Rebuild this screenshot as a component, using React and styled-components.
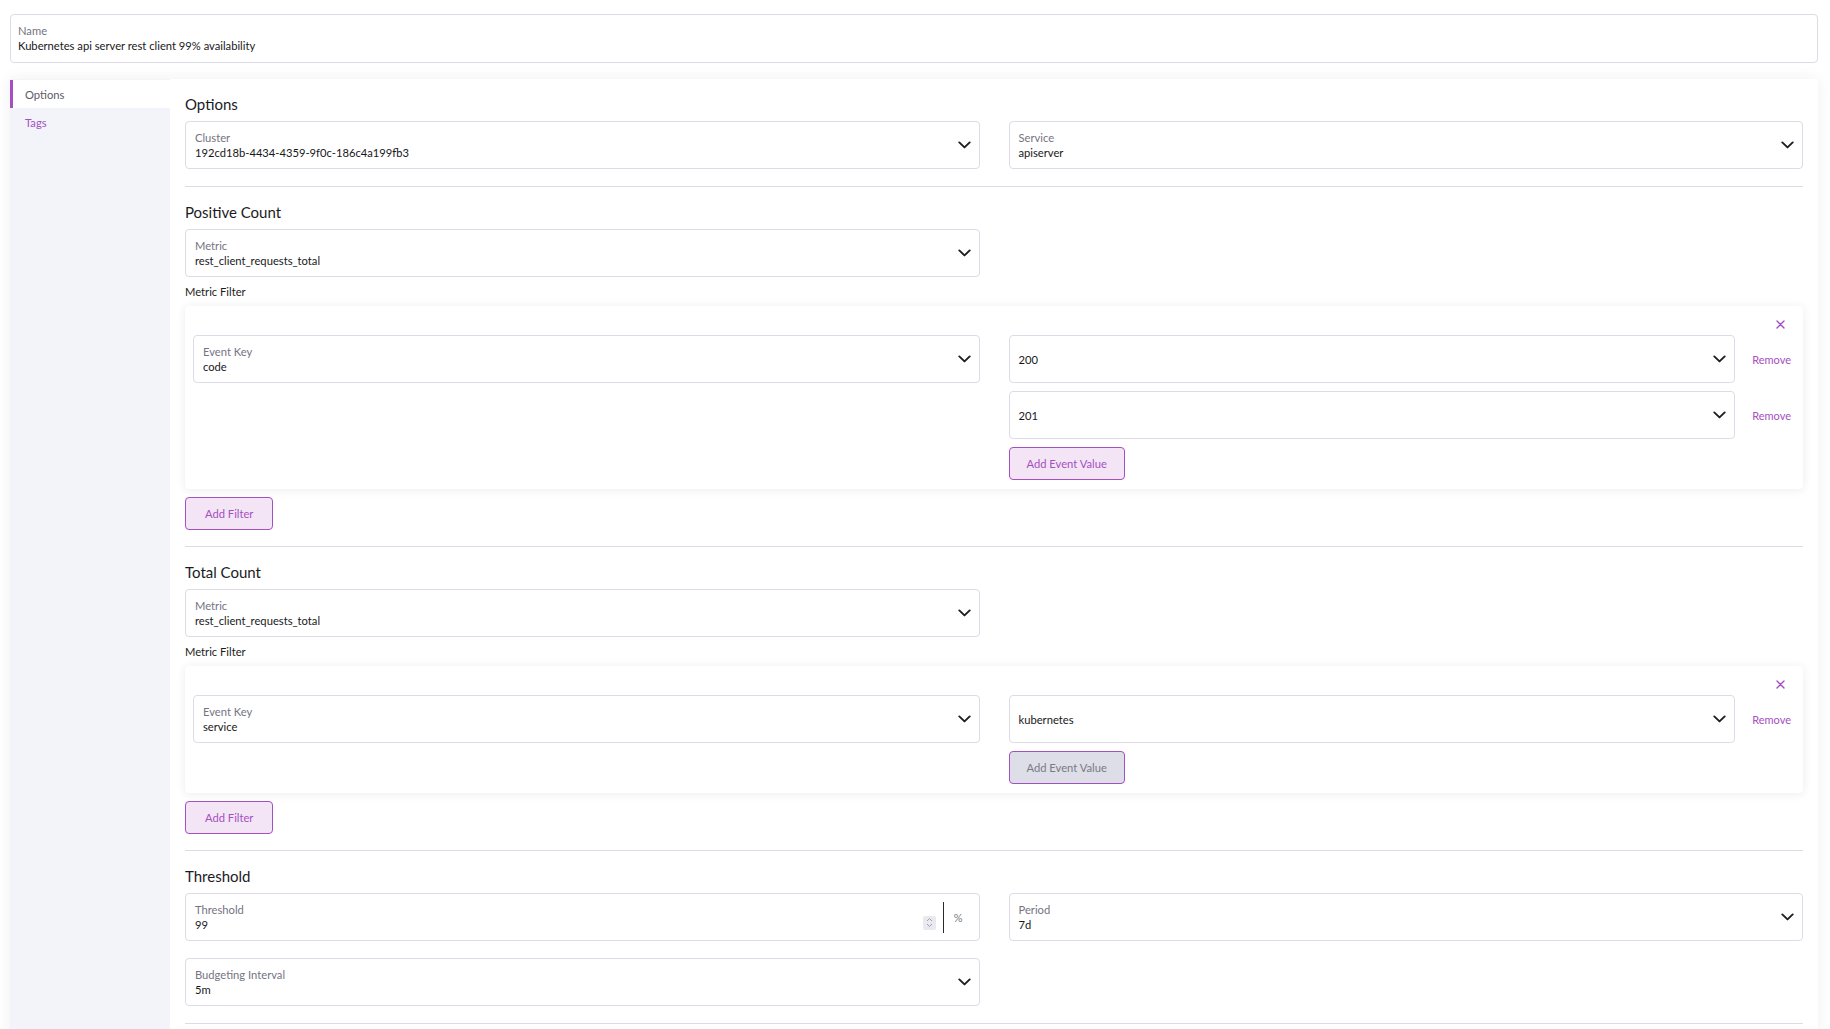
import React from 'react';
import styled, { createGlobalStyle, css } from 'styled-components';

const purple = '#a550c0';
const line = '#dddbe6';

const GlobalStyle = createGlobalStyle`
  html, body {
    margin: 0;
    padding: 0;
    background: #fff;
  }
  body {
    font-family: Lato, "Open Sans", sans-serif;
    color: #1c1c20;
  }
  * { box-sizing: border-box; }
  ::-webkit-scrollbar { width: 7px; }
  ::-webkit-scrollbar-track { background: #ededf2; }
  ::-webkit-scrollbar-thumb { background: #b4b4c0; border-radius: 4px; }
`;

const Chevron = () => (
  <svg width='13' height='8' viewBox='0 0 13 8' fill='none'>
    <path d='M1.3 1.4L6.5 6.4l5.2-5' stroke='#1d1d22' strokeWidth='1.9' strokeLinecap='round' strokeLinejoin='round' />
  </svg>
);

const Cross = () => (
  <svg width='9' height='9' viewBox='0 0 9 9' fill='none'>
    <path d='M1 1l7 7M8 1L1 8' stroke={purple} strokeWidth='1.4' strokeLinecap='round' />
  </svg>
);

const Select = ({ label, value }) => (
  <Field>
    <FieldText>
      {label && <FieldLabel>{label}</FieldLabel>}
      <FieldValue>{value}</FieldValue>
    </FieldText>
    <Chevron />
  </Field>
);

const ValueRow = ({ value }) => (
  <ValueLine>
    <Select value={value} />
    <RemoveLink>Remove</RemoveLink>
  </ValueLine>
);

const FilterBlock = ({ eventKey, values, disabled }) => (
  <>
    <SubLabel>Metric Filter</SubLabel>
    <FilterCard>
      <CloseRow>
        <Cross />
      </CloseRow>
      <Grid>
        <Select label='Event Key' value={eventKey} />
        <ValueColumn>
          {values.map((v) => (
            <ValueRow key={v} value={v} />
          ))}
          <Button disabled={disabled}>Add Event Value</Button>
        </ValueColumn>
      </Grid>
    </FilterCard>
    <AddFilter>Add Filter</AddFilter>
  </>
);

const App = () => {
  return (
    <Page>
      <GlobalStyle />
      <NameBox>
        <FieldLabel>Name</FieldLabel>
        <FieldValue>Kubernetes api server rest client 99% availability</FieldValue>
      </NameBox>

      <Main>
        <Sidebar>
          <Tab active>Options</Tab>
          <Tab>Tags</Tab>
        </Sidebar>

        <Content>
          <Section>
            <Heading>Options</Heading>
            <Grid>
              <Select label='Cluster' value='192cd18b-4434-4359-9f0c-186c4a199fb3' />
              <Select label='Service' value='apiserver' />
            </Grid>
          </Section>

          <Section tight>
            <Heading>Positive Count</Heading>
            <Grid>
              <Select label='Metric' value='rest_client_requests_total' />
            </Grid>
            <FilterBlock eventKey='code' values={['200', '201']} />
          </Section>

          <Section tight>
            <Heading>Total Count</Heading>
            <Grid>
              <Select label='Metric' value='rest_client_requests_total' />
            </Grid>
            <FilterBlock eventKey='service' values={['kubernetes']} disabled />
          </Section>

          <Section>
            <Heading>Threshold</Heading>
            <Grid>
              <Field>
                <FieldText>
                  <FieldLabel>Threshold</FieldLabel>
                  <FieldValue>99</FieldValue>
                </FieldText>
                <Spinner>
                  <svg width='7' height='11' viewBox='0 0 7 11' fill='none'>
                    <path d='M1 4l2.5-2.5L6 4M1 7l2.5 2.5L6 7' stroke='#9a9aa6' strokeWidth='0.9' />
                  </svg>
                </Spinner>
                <Addon>%</Addon>
              </Field>
              <Select label='Period' value='7d' />
              <Select label='Budgeting Interval' value='5m' />
            </Grid>
          </Section>
        </Content>
      </Main>
    </Page>
  );
};

const Page = styled.div`
  padding: 14px 12px 0 10px;
`;

const NameBox = styled.div`
  border: 1px solid ${line};
  border-radius: 4px;
  height: 49px;
  padding: 8px 7px;
  background: #fff;
`;

const Main = styled.div`
  display: flex;
  margin-top: 16px;
  min-height: 1400px;
  box-shadow: 0 0 14px rgba(40, 40, 90, 0.07);
`;

const Sidebar = styled.div`
  width: 160px;
  flex-shrink: 0;
  background: #f3f4f9;
  padding-top: 1px;
`;

const Tab = styled.div`
  display: flex;
  align-items: center;
  height: 28px;
  padding-left: 12px;
  border-left: 3px solid transparent;
  font-size: 11.2px;
  color: ${purple};
  cursor: pointer;

  ${(props) =>
    props.active &&
    css`
      background: #fff;
      border-left-color: ${purple};
      color: #5d5d69;
    `}
`;

const Content = styled.div`
  flex: 1;
  background: #fff;
  padding: 0 15px;
`;

const Section = styled.div`
  padding: 15px 0 ${(props) => (props.tight ? '16px' : '17px')};
  border-bottom: 1px solid ${line};
`;

const Heading = styled.h2`
  margin: 0 0 7px;
  font-size: 15px;
  line-height: 20px;
  font-weight: 400;
  color: #1b1b1f;
`;

const Grid = styled.div`
  display: grid;
  grid-template-columns: 1fr 1fr;
  column-gap: 29px;
  row-gap: 17px;
  align-items: start;
`;

const Field = styled.div`
  display: flex;
  align-items: center;
  height: 48px;
  flex: 1;
  min-width: 0;
  padding: 0 8px 0 9px;
  border: 1px solid ${line};
  border-radius: 4px;
  background: #fff;
`;

const FieldText = styled.div`
  flex: 1;
  min-width: 0;
`;

const FieldLabel = styled.div`
  font-size: 11.2px;
  line-height: 15px;
  color: #74747f;
`;

const FieldValue = styled.div`
  font-size: 11.2px;
  line-height: 15px;
  color: #18181b;
`;

const Spinner = styled.span`
  display: flex;
  align-items: center;
  justify-content: center;
  width: 13px;
  height: 14px;
  margin-top: 11px;
  background: #e9e9ef;
  border-radius: 2px;
`;

const Addon = styled.span`
  display: flex;
  align-items: center;
  height: 31px;
  margin-left: 7px;
  padding: 0 8px 0 10px;
  border-left: 1px solid #2a2a2e;
  font-size: 11px;
  color: #7a7a86;
`;

const SubLabel = styled.div`
  margin: 8px 0 7px;
  font-size: 11.2px;
  line-height: 14px;
  color: #1c1c20;
`;

const FilterCard = styled.div`
  background: #fff;
  border-radius: 4px;
  padding: 8px 8px 9px;
  box-shadow: 0 1px 10px rgba(40, 40, 90, 0.09);
`;

const CloseRow = styled.div`
  display: flex;
  justify-content: flex-end;
  align-items: center;
  height: 21px;
  padding-right: 10px;
  cursor: pointer;
`;

const ValueColumn = styled.div`
  display: flex;
  flex-direction: column;
  align-items: flex-start;
  gap: 8px;
`;

const ValueLine = styled.div`
  display: flex;
  align-items: center;
  width: 100%;
`;

const RemoveLink = styled.span`
  padding: 0 4px 0 17px;
  font-size: 11px;
  color: ${purple};
  cursor: pointer;
`;

const Button = styled.button`
  height: 33px;
  padding: 0 17px;
  border: 1px solid ${purple};
  border-radius: 4px;
  background: #f3e5f6;
  color: ${purple};
  font-family: Lato, sans-serif;
  font-size: 11.2px;
  cursor: pointer;

  ${(props) =>
    props.disabled &&
    css`
      background: #dddee7;
      color: #7a7a85;
      cursor: default;
    `}
`;

const AddFilter = styled(Button)`
  margin-top: 8px;
  padding: 0 19px;
`;

export default App;
